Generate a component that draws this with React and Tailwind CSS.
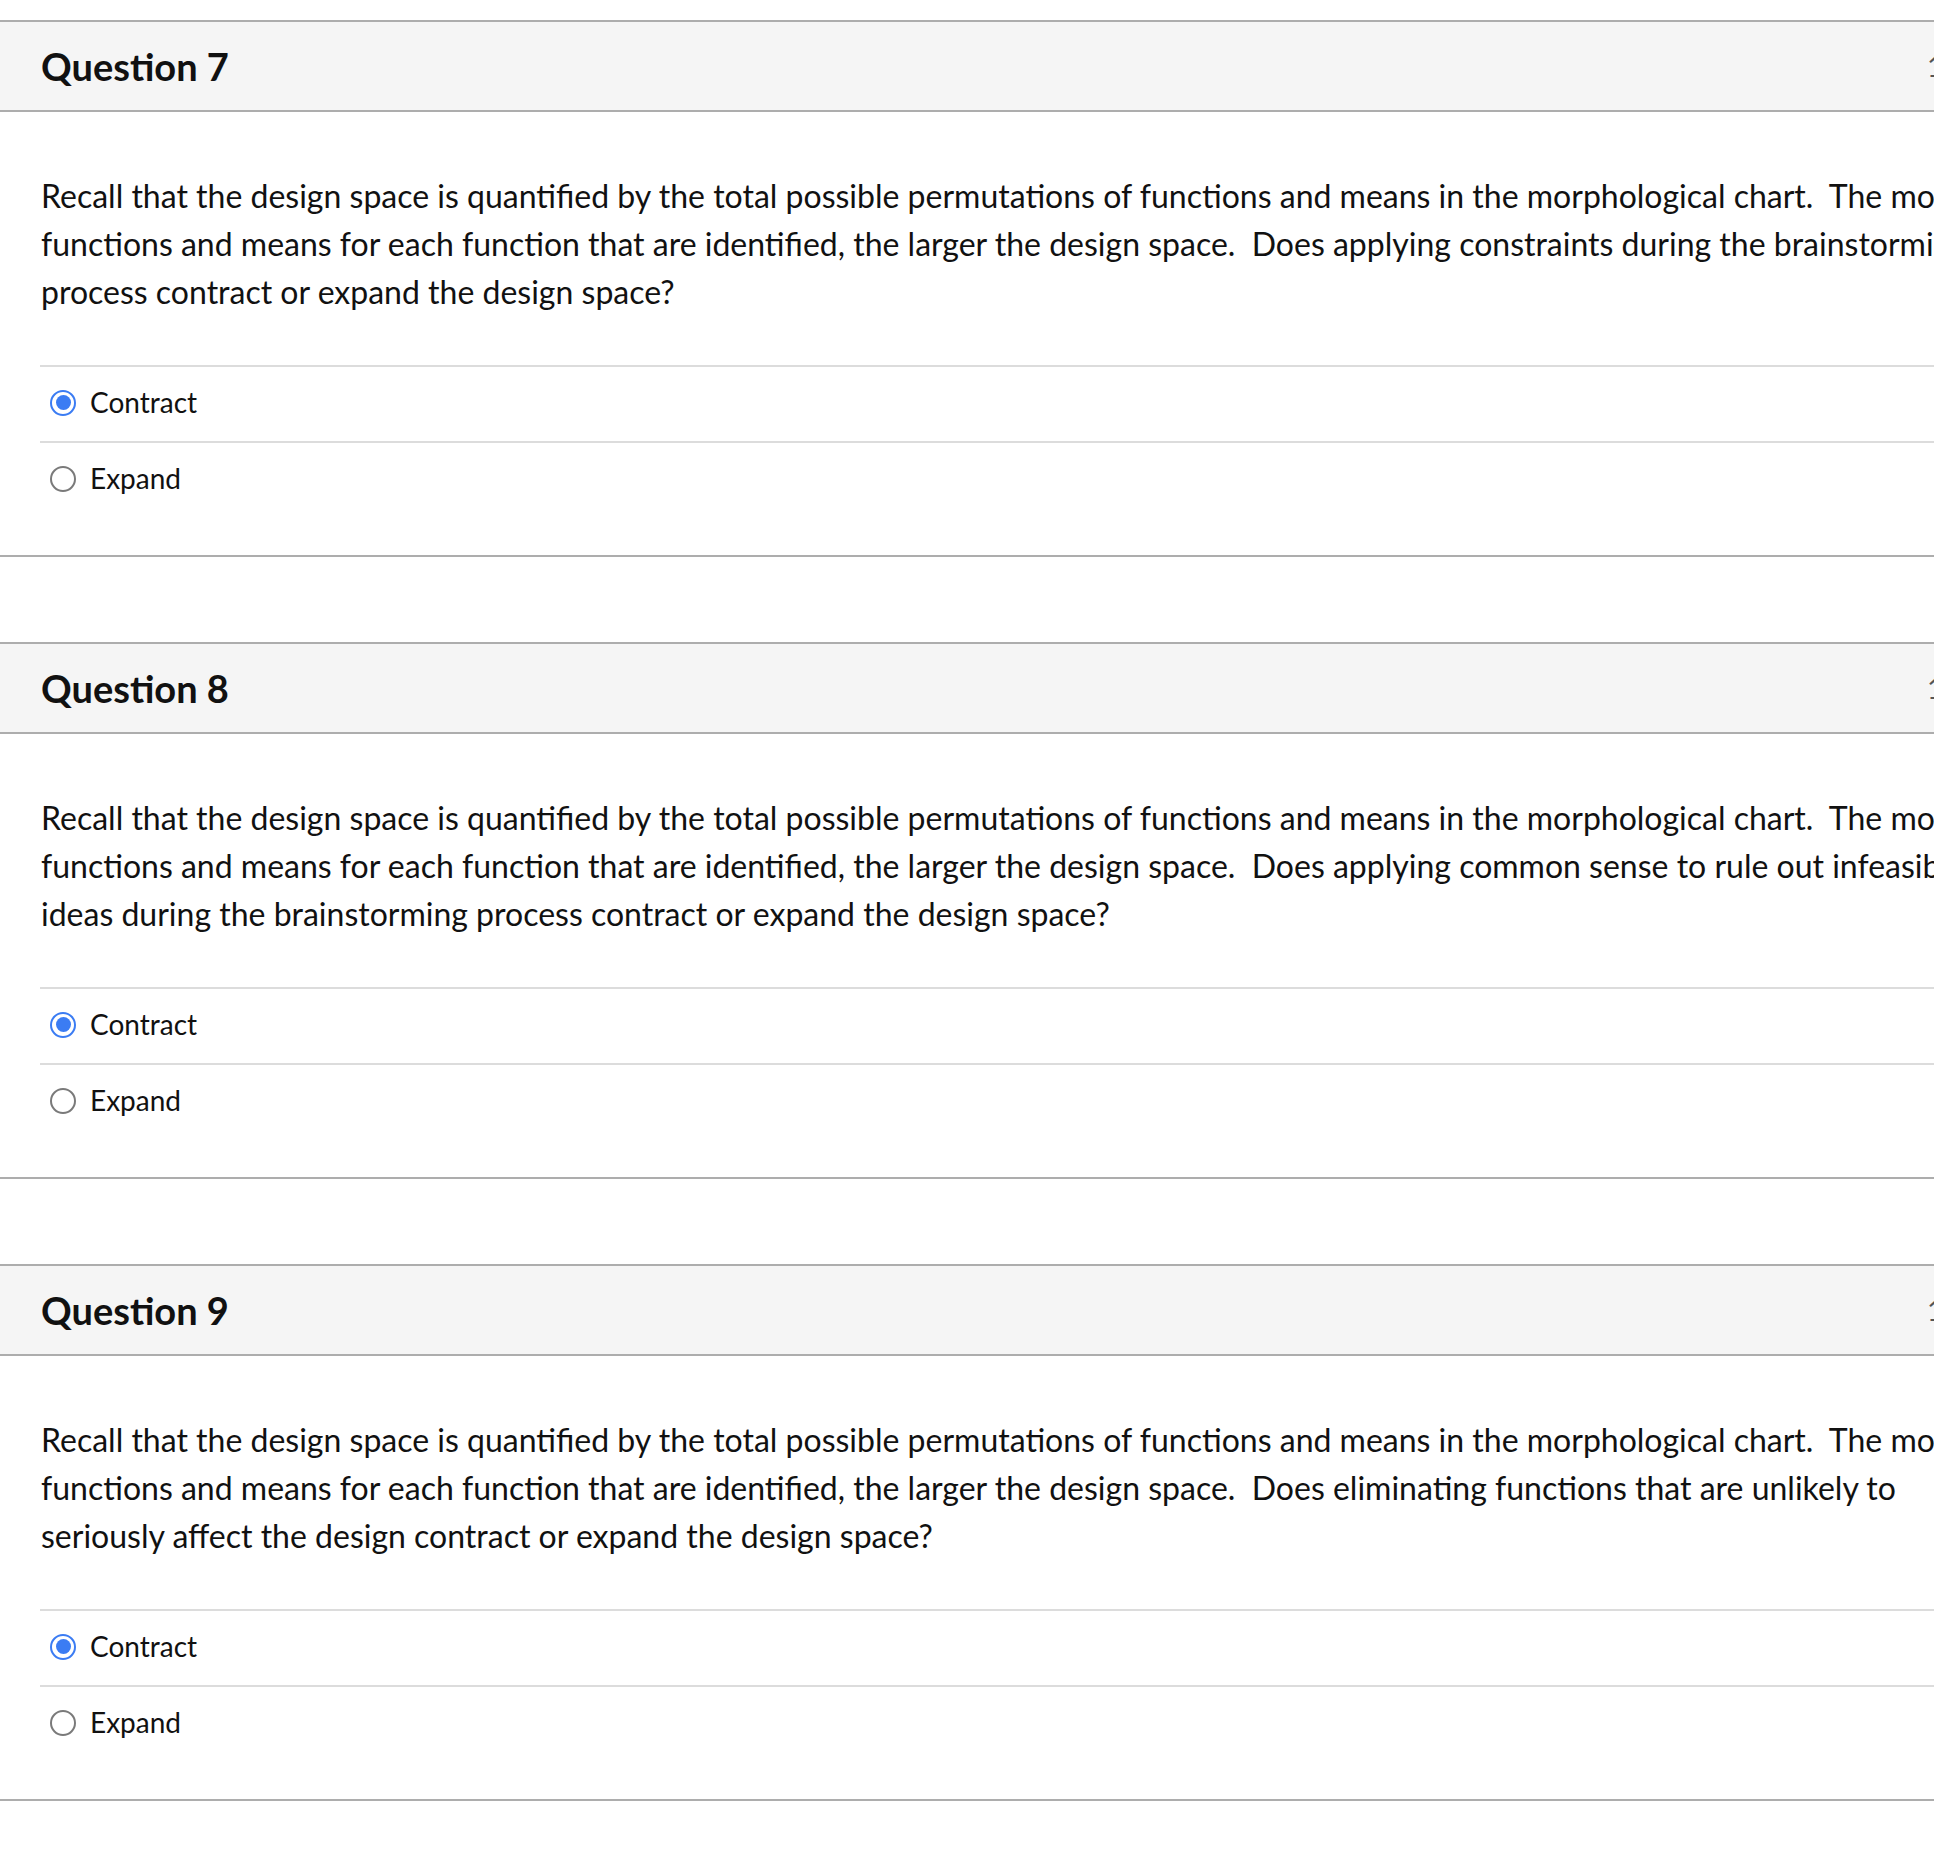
const stem =
  "Recall that the design space is quantified by the total possible permutations of functions and means in the morphological chart.\u00a0 The more functions and means for each function that are identified, the larger the design space.\u00a0 ";

const questions = [
  {
    title: "Question 7",
    text: stem + "Does applying constraints during the brainstorming process contract or expand the design space?",
  },
  {
    title: "Question 8",
    text:
      stem +
      "Does applying common sense to rule out infeasible ideas during the brainstorming process contract or expand the design space?",
  },
  {
    title: "Question 9",
    text:
      stem +
      "Does eliminating functions that are unlikely to seriously affect the design contract or expand the design space?",
  },
];

const Radio = ({ checked }) =>
  checked ? (
    <span className="w-[26px] h-[26px] rounded-full border-[2.5px] border-[#3b7cf3] flex items-center justify-center shrink-0">
      <span className="w-[15px] h-[15px] rounded-full bg-[#3b7cf3]"></span>
    </span>
  ) : (
    <span className="w-[26px] h-[26px] rounded-full border-2 border-[#7a7a7a] bg-white shrink-0"></span>
  );

const Answer = ({ label, checked }) => (
  <div className="h-[76px] border-t-2 border-[#dcdcdc] flex items-center gap-[14px] pl-[10px] pb-[3px]">
    <Radio checked={checked} />
    <span className="text-[28px] leading-[34px] text-[#111] -mt-[2px]">{label}</span>
  </div>
);

const Question = ({ title, text }) => (
  <div className="border-b-2 border-[#adadad]">
    {/* header bar */}
    <div className="h-[92px] bg-[#f5f5f5] border-y-2 border-[#adadad] flex items-center justify-between pl-[41px] pr-[40px]">
      <h2 className="text-[38px] font-bold text-[#111]">{title}</h2>
      <span className="text-[28px] text-[#555]">1 pts</span>
    </div>
    <div className="pt-[60px] pb-[38px] pl-[41px] pr-[44px]">
      <p className="text-[32px] leading-[48px] text-[#111]">{text}</p>
      <div className="mt-[49px] -ml-[1px]">
        <Answer label="Contract" checked />
        <Answer label="Expand" />
      </div>
    </div>
  </div>
);

export default function App() {
  return (
    <div
      className="w-[1934px] min-h-[1852px] bg-white overflow-hidden pt-[20px]"
      style={{ fontFamily: "Lato, 'Noto Sans', sans-serif" }}
    >
      <div className="w-[2028px] flex flex-col gap-[85px]">
        {questions.map((q) => (
          <Question key={q.title} title={q.title} text={q.text} />
        ))}
      </div>
    </div>
  );
}
